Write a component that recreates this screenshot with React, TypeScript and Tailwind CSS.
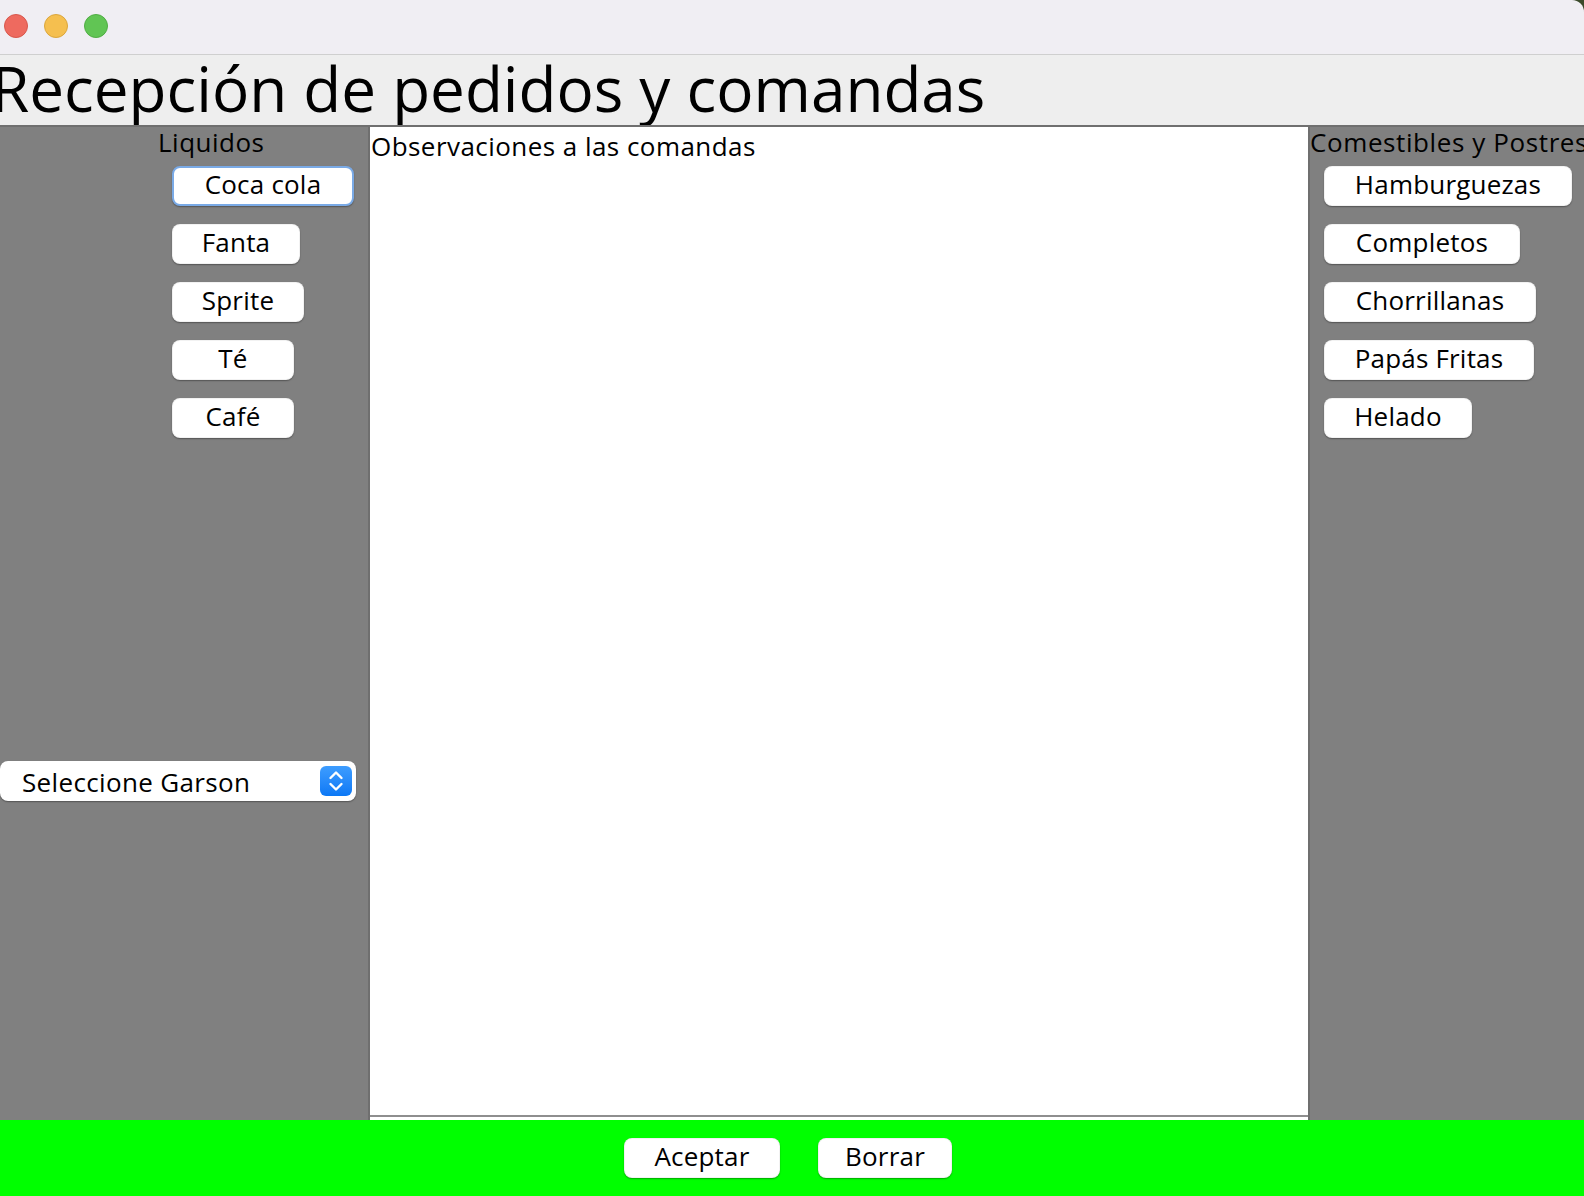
import React from "react";

// Ventana de recepción de pedidos (look Swing / Aqua)
type Item = { label: string; width: string };

const liquidos: Item[] = [
  { label: "Coca cola", width: "w-[182px]" },
  { label: "Fanta", width: "w-[128px]" },
  { label: "Sprite", width: "w-[132px]" },
  { label: "Té", width: "w-[122px]" },
  { label: "Café", width: "w-[122px]" },
];

const comestibles: Item[] = [
  { label: "Hamburguezas", width: "w-[248px]" },
  { label: "Completos", width: "w-[196px]" },
  { label: "Chorrillanas", width: "w-[212px]" },
  { label: "Papás Fritas", width: "w-[210px]" },
  { label: "Helado", width: "w-[148px]" },
];

const AquaButton = ({
  label,
  width,
  focused = false,
}: {
  label: string;
  width: string;
  focused?: boolean;
}) => (
  <button
    type="button"
    className={`${width} h-[40px] shrink-0 flex items-center justify-center pb-[5px] rounded-[8px] bg-white text-[26px] leading-none tracking-[0.2px] text-black whitespace-nowrap shadow-[0_1px_1.5px_rgba(0,0,0,0.35)] ${
      focused
        ? "border-2 border-[#7aaae6]"
        : "border border-black/5"
    }`}
  >
    {label}
  </button>
);

const App = () => {
  return (
    <div
      className="w-[1584px] h-[1196px] overflow-hidden bg-[#3b4a2a] flex flex-col text-black"
      style={{ fontFamily: '"Open Sans", "DejaVu Sans", sans-serif' }}
    >
      {/* Barra de título */}
      <div className="h-[55px] shrink-0 bg-[#f0eef3] border-b border-[#cfcfcf] rounded-tr-[12px] flex items-start pt-[14px] pl-[4px] gap-[16px]">
        <span className="w-[24px] h-[24px] rounded-full bg-[#ee6a5f] border border-[#d8574c]" />
        <span className="w-[24px] h-[24px] rounded-full bg-[#f5bf4f] border border-[#dba63c]" />
        <span className="w-[24px] h-[24px] rounded-full bg-[#61c554] border border-[#50ad44]" />
      </div>

      {/* Encabezado */}
      <div className="h-[70px] shrink-0 bg-[#eeeeee] overflow-hidden">
        <h1 className="ml-[-9px] text-[62px] leading-[66px] font-normal whitespace-nowrap">
          Recepción de pedidos y comandas
        </h1>
      </div>

      {/* Cuerpo */}
      <div className="flex-1 flex bg-[#808080] border-t-2 border-[#6f6f6f] min-h-0">
        {/* Liquidos */}
        <div className="w-[368px] shrink-0 flex flex-col items-start">
          <p className="ml-[158px] text-[26px] leading-[30px] tracking-[0.5px]">Liquidos</p>
          <div className="ml-[172px] mt-[9px] flex flex-col items-start gap-[18px]">
            {liquidos.map((it, i) => (
              <AquaButton key={it.label} label={it.label} width={it.width} focused={i === 0} />
            ))}
          </div>

          {/* Combo garzón */}
          <div className="mt-[323px] w-[356px] h-[40px] rounded-[8px] bg-white shadow-[0_1px_1.5px_rgba(0,0,0,0.35)] flex items-center justify-between pl-[22px] pr-[4px]">
            <span className="pt-[2px] text-[26px] leading-none tracking-[0.35px] whitespace-nowrap">Seleccione Garson</span>
            <span className="w-[32px] h-[30px] rounded-[6px] bg-gradient-to-b from-[#3d9dff] to-[#0a78f5] flex items-center justify-center">
              <svg width="32" height="30" viewBox="0 0 32 30" fill="none">
                <path d="M10.5 12 L16 6.5 L21.5 12" stroke="white" strokeWidth="2.4" strokeLinecap="round" strokeLinejoin="round" />
                <path d="M10.5 18 L16 23.5 L21.5 18" stroke="white" strokeWidth="2.4" strokeLinecap="round" strokeLinejoin="round" />
              </svg>
            </span>
          </div>
        </div>

        {/* Observaciones */}
        <div className="w-[942px] shrink-0 border-x-2 border-[#6f6f6f] bg-white flex flex-col">
          <div className="flex-1 pt-[4px] pl-[1px]">
            <p className="text-[26px] leading-[30px] tracking-[0.45px]">Observaciones a las comandas</p>
          </div>
          <div className="h-[2px] bg-[#8e8e8e]" />
          <div className="h-[3px] bg-white" />
        </div>

        {/* Comestibles y Postres */}
        <div className="flex-1 flex flex-col items-start min-w-0">
          <p className="text-[26px] leading-[30px] tracking-[0.6px] whitespace-nowrap">Comestibles y Postres</p>
          <div className="ml-[14px] mt-[9px] flex flex-col items-start gap-[18px]">
            {comestibles.map((it) => (
              <AquaButton key={it.label} label={it.label} width={it.width} />
            ))}
          </div>
        </div>
      </div>

      {/* Pie */}
      <div className="h-[76px] shrink-0 bg-[#00ff00] flex items-center justify-center gap-[38px] pr-[8px]">
        <AquaButton label="Aceptar" width="w-[156px]" />
        <AquaButton label="Borrar" width="w-[134px]" />
      </div>
    </div>
  );
};

export default App;
